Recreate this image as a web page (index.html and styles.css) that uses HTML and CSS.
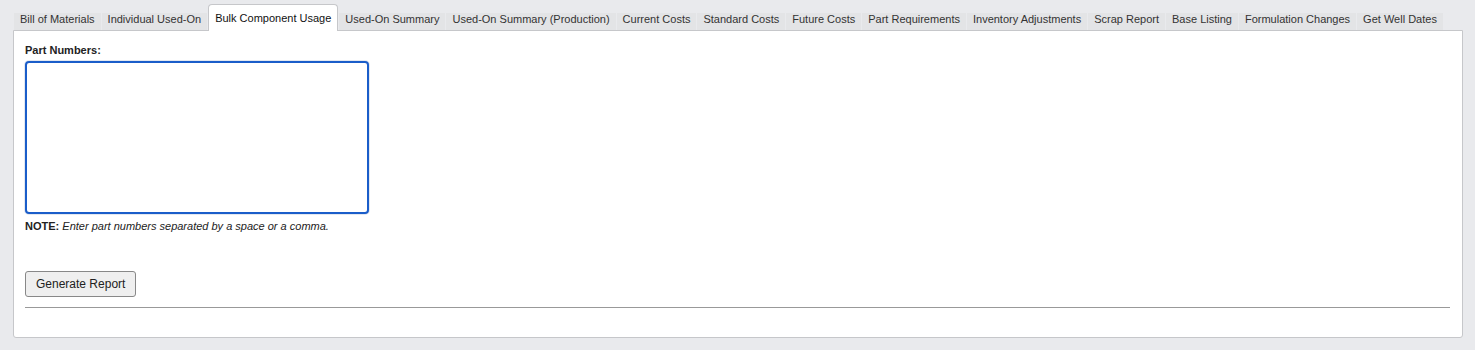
FILE: index.html
```html
<!DOCTYPE html>
<html lang="en">
<head>
    <meta charset="UTF-8">
    <title>Bulk Component Usage</title>
    <link rel="stylesheet" href="styles.css">
</head>
<body>
    <ul class="tabs">
        <li class="tab">Bill of Materials</li>
        <li class="tab">Individual Used-On</li>
        <li class="tab active">Bulk Component Usage</li>
        <li class="tab">Used-On Summary</li>
        <li class="tab">Used-On Summary (Production)</li>
        <li class="tab">Current Costs</li>
        <li class="tab">Standard Costs</li>
        <li class="tab">Future Costs</li>
        <li class="tab">Part Requirements</li>
        <li class="tab">Inventory Adjustments</li>
        <li class="tab">Scrap Report</li>
        <li class="tab">Base Listing</li>
        <li class="tab">Formulation Changes</li>
        <li class="tab">Get Well Dates</li>
    </ul>

    <div class="panel">
        <label class="field-label" for="parts">Part Numbers:</label>
        <textarea id="parts" class="parts-input" autofocus></textarea>
        <p class="note"><b>NOTE:</b> <i>Enter part numbers separated by a space or a comma.</i></p>
        <button class="btn">Generate Report</button>
        <hr class="divider">
    </div>
</body>
</html>
```

FILE: styles.css
```css
body {
    background: #e9eaed;
    font-family: 'Liberation Sans', Arial, sans-serif;
    margin: 0;
    padding: 4px 12px 12px 13px;
    color: #222;
}

.tabs {
    display: flex;
    align-items: flex-end;
    list-style: none;
    margin: 0;
    padding: 0 0 0 1px;
    height: 26px;
}

.tab {
    font-size: 11px;
    color: #333;
    background: #e3e4e6;
    height: 17px;
    line-height: 12px;
    box-sizing: border-box;
    padding: 0 6px;
    margin-right: 1px;
    white-space: nowrap;
}

.tab.active {
    background: #fff;
    border: 1px solid #c6c7ca;
    border-bottom: none;
    border-radius: 4px 4px 0 0;
    height: 27px;
    padding-top: 7px;
    margin-bottom: -1px;
    position: relative;
    color: #111;
}

.panel {
    background: #fff;
    border: 1px solid #c6c7ca;
    border-radius: 0 0 3px 3px;
    padding: 13px 12px 29px 11px;
    display: flex;
    flex-direction: column;
    align-items: flex-start;
}

.field-label {
    font-size: 11px;
    font-weight: bold;
    margin-bottom: 5px;
}

.parts-input {
    box-sizing: border-box;
    width: 344px;
    height: 153px;
    border: 2px solid #1a5dc9;
    border-radius: 4px;
    box-shadow: 0 0 0 1px #e3e8f0;
    outline: none;
    resize: none;
    margin: 0;
    padding: 2px 4px;
    font-family: inherit;
    font-size: 12px;
}

.note {
    font-size: 11px;
    line-height: 13px;
    margin: 6px 0 0;
}

.btn {
    margin-top: 38px;
    height: 26px;
    padding: 0 10px;
    background: #efefef;
    border: 1px solid #888;
    border-radius: 3px;
    font-family: inherit;
    font-size: 12px;
    color: #222;
}

.divider {
    align-self: stretch;
    border: none;
    border-top: 1px solid #999;
    margin: 10px 0 0;
}
```
